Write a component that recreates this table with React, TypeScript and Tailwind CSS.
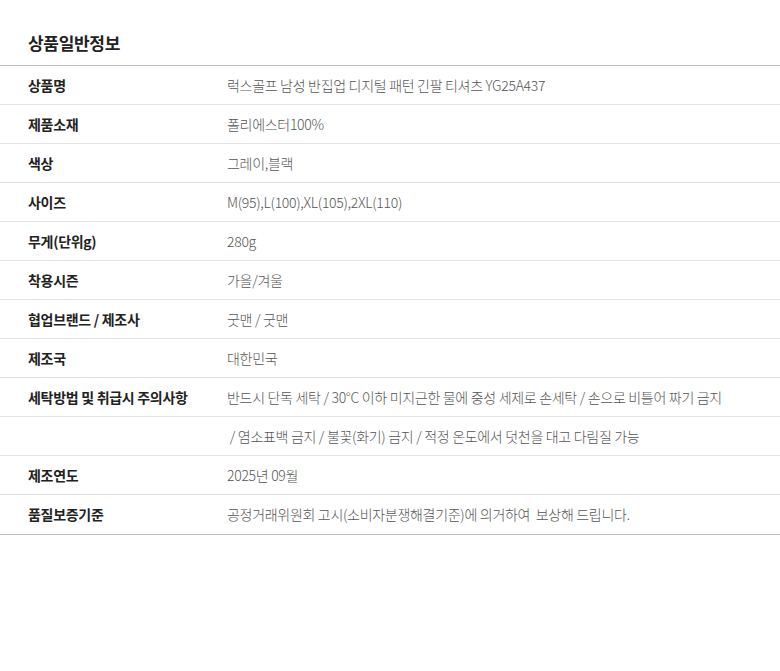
import React from 'react';

const rows: [string, string][] = [
  ['상품명', '럭스골프 남성 반집업 디지털 패턴 긴팔 티셔츠 YG25A437'],
  ['제품소재', '폴리에스터100%'],
  ['색상', '그레이,블랙'],
  ['사이즈', 'M(95),L(100),XL(105),2XL(110)'],
  ['무게(단위g)', '280g'],
  ['착용시즌', '가을/겨울'],
  ['협업브랜드 / 제조사', '굿맨 / 굿맨'],
  ['제조국', '대한민국'],
  ['세탁방법 및 취급시 주의사항', '반드시 단독 세탁 / 30°C 이하 미지근한 물에 중성 세제로 손세탁 / 손으로 비틀어 짜기 금지'],
  ['', ' / 염소표백 금지 / 불꽃(화기) 금지 / 적정 온도에서 덧천을 대고 다림질 가능'],
  ['제조연도', '2025년 09월'],
  ['품질보증기준', '공정거래위원회 고시(소비자분쟁해결기준)에 의거하여  보상해 드립니다.'],
];

export default function App() {
  return (
    <div className="min-h-screen bg-white font-['Noto_Sans_CJK_KR','Noto_Sans',sans-serif]">
      <div className="h-[65px] flex items-end pl-[28px] pb-[10px]">
        <h2 className="text-[17px] font-bold text-[#222] tracking-[-0.3px]">상품일반정보</h2>
      </div>
      <div className="border-t border-b border-[#bdbdbd]">
        {rows.map(([label, value], i) => (
          <div
            key={i}
            className={`flex items-center h-[39px] ${i < rows.length - 1 ? 'border-b border-[#e3e3e3]' : ''}`}
          >
            <div className="w-[227px] shrink-0 pl-[28px] text-[14px] font-bold text-[#222] tracking-[-0.3px]">{label}</div>
            <div className="text-[14px] font-light text-[#555] tracking-[-0.3px] whitespace-pre">{value}</div>
          </div>
        ))}
      </div>
    </div>
  );
}
